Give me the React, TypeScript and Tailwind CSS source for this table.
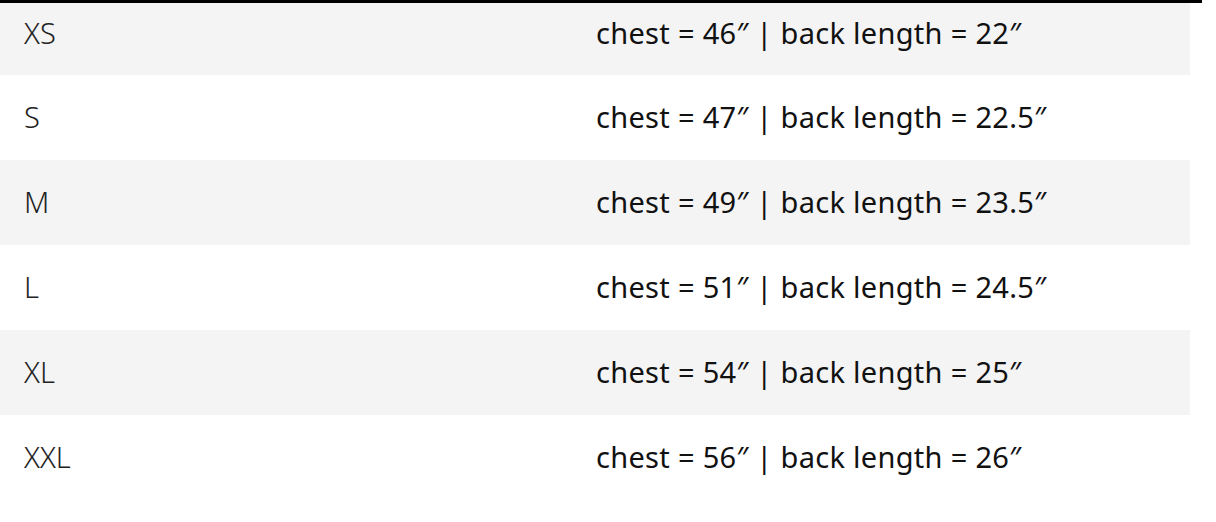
import React from "react";

const rows = [
  ["XS", "chest = 46″ | back length = 22″"],
  ["S", "chest = 47″ | back length = 22.5″"],
  ["M", "chest = 49″ | back length = 23.5″"],
  ["L", "chest = 51″ | back length = 24.5″"],
  ["XL", "chest = 54″ | back length = 25″"],
  ["XXL", "chest = 56″ | back length = 26″"],
];

export default function App() {
  return (
    <div className="w-[1216px] h-[522px] bg-white overflow-hidden">
      <div className="w-[1202px] border-t-[3px] border-black">
        {rows.map(([size, desc], i) => (
          <div
            key={size}
            className={`w-[1190px] grid grid-cols-[571px_1fr] items-center ${
              i === 0 ? "h-[72px] pb-[13px]" : "h-[85px] pb-[3px]"
            } ${i % 2 === 0 ? "bg-[#f4f4f4]" : "bg-white"}`}
          >
            <div className="pl-[24px] text-[29px] leading-none text-[#222] font-['Noto_Sans',sans-serif] font-light">
              {size}
            </div>
            <div className="pl-[25px] text-[29px] leading-none tracking-[0.3px] text-[#111] font-['Noto_Sans',sans-serif] font-normal whitespace-nowrap">
              {desc}
            </div>
          </div>
        ))}
      </div>
    </div>
  );
}
